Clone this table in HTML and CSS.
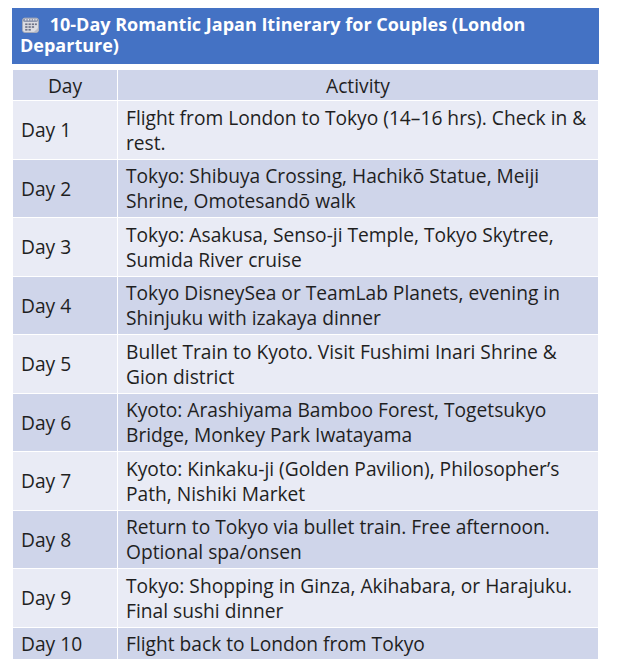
FILE: index.html
```html
<!DOCTYPE html>
<html>
<head>
<meta charset="utf-8">
<link rel="stylesheet" href="styles.css">
</head>
<body>
<div class="wrap">
  <div class="title"><svg class="cal" viewBox="0 0 16 15" width="17" height="16"><rect x="0.5" y="1" width="15" height="13.5" rx="2" fill="#dcdde3" stroke="#a9abb6" stroke-width="0.8"/><rect x="0.9" y="1.4" width="14.2" height="3.2" rx="1.5" fill="#8e97ae"/><g fill="#f0f0f4"><circle cx="3.5" cy="2.6" r="0.7"/><circle cx="6" cy="2.6" r="0.7"/><circle cx="8.5" cy="2.6" r="0.7"/><circle cx="11" cy="2.6" r="0.7"/><circle cx="13.3" cy="2.6" r="0.7"/></g><g fill="#6f7488"><rect x="3" y="6" width="2.2" height="1.6"/><rect x="6.1" y="6" width="2.2" height="1.6"/><rect x="9.2" y="6" width="2.2" height="1.6"/><rect x="12.2" y="6" width="1.8" height="1.6"/><rect x="3" y="8.6" width="2.2" height="1.6"/><rect x="6.1" y="8.6" width="2.2" height="1.6"/><rect x="9.2" y="8.6" width="2.2" height="1.6"/><rect x="3" y="11.2" width="2.2" height="1.6"/><rect x="6.1" y="11.2" width="2.2" height="1.6"/></g><path d="M11 14.3 L15.3 10 L15.3 12.5 Q15.3 14.3 13.5 14.3 Z" fill="#b9bcc8"/></svg> 10-Day Romantic Japan Itinerary for Couples (London Departure)</div>
  <table class="plan">
    <thead>
      <tr><th class="day">Day</th><th>Activity</th></tr>
    </thead>
    <tbody>
      <tr><td class="day">Day 1</td><td>Flight from London to Tokyo (14–16 hrs). Check in &amp; rest.</td></tr>
      <tr><td class="day">Day 2</td><td>Tokyo: Shibuya Crossing, Hachikō Statue, Meiji Shrine, Omotesandō walk</td></tr>
      <tr><td class="day">Day 3</td><td>Tokyo: Asakusa, Senso-ji Temple, Tokyo Skytree, Sumida River cruise</td></tr>
      <tr><td class="day">Day 4</td><td>Tokyo DisneySea or TeamLab Planets, evening in Shinjuku with izakaya dinner</td></tr>
      <tr><td class="day">Day 5</td><td>Bullet Train to Kyoto. Visit Fushimi Inari Shrine &amp; Gion district</td></tr>
      <tr><td class="day">Day 6</td><td>Kyoto: Arashiyama Bamboo Forest, Togetsukyo Bridge, Monkey Park Iwatayama</td></tr>
      <tr><td class="day">Day 7</td><td>Kyoto: Kinkaku-ji (Golden Pavilion), Philosopher’s Path, Nishiki Market</td></tr>
      <tr><td class="day">Day 8</td><td>Return to Tokyo via bullet train. Free afternoon. Optional spa/onsen</td></tr>
      <tr><td class="day">Day 9</td><td>Tokyo: Shopping in Ginza, Akihabara, or Harajuku. Final sushi dinner</td></tr>
      <tr><td class="day">Day 10</td><td>Flight back to London from Tokyo</td></tr>
    </tbody>
  </table>
</div>
</body>
</html>
```
FILE: styles.css
```css
html, body {
  margin: 0;
  padding: 0;
  background: #ffffff;
}
body {
  font-family: "Open Sans", "Noto Sans", sans-serif;
  color: #1f1f1f;
}
.wrap {
  width: 587px;
  margin: 8px 0 0 12px;
}
.title {
  background: #4472c4;
  color: #ffffff;
  font-weight: 700;
  font-size: 18px;
  line-height: 21px;
  padding: 6px 8px 8px 8px;
}
.cal {
  vertical-align: -2px;
  margin-left: 2px;
  margin-right: 6px;
}
.plan {
  width: 100%;
  margin-top: 5px;
  border-collapse: collapse;
  font-size: 19.2px;
  line-height: 25px;
}
.plan th, .plan td {
  border: 1px solid #ffffff;
  padding: 3.75px 7px 3.75px 8px;
  text-align: left;
  vertical-align: middle;
}
.plan th {
  font-weight: 400;
  text-align: center;
  background: #cfd5ea;
  padding: 2.5px 8px;
}
.plan .day {
  width: 88px;
}
.plan th.day {
  text-align: center;
}
.plan tbody tr:nth-child(odd) td {
  background: #e9ebf5;
}
.plan tbody tr:nth-child(even) td {
  background: #cfd5ea;
}
.plan tbody tr:last-child td {
  padding-top: 3px;
  padding-bottom: 3px;
}
```
